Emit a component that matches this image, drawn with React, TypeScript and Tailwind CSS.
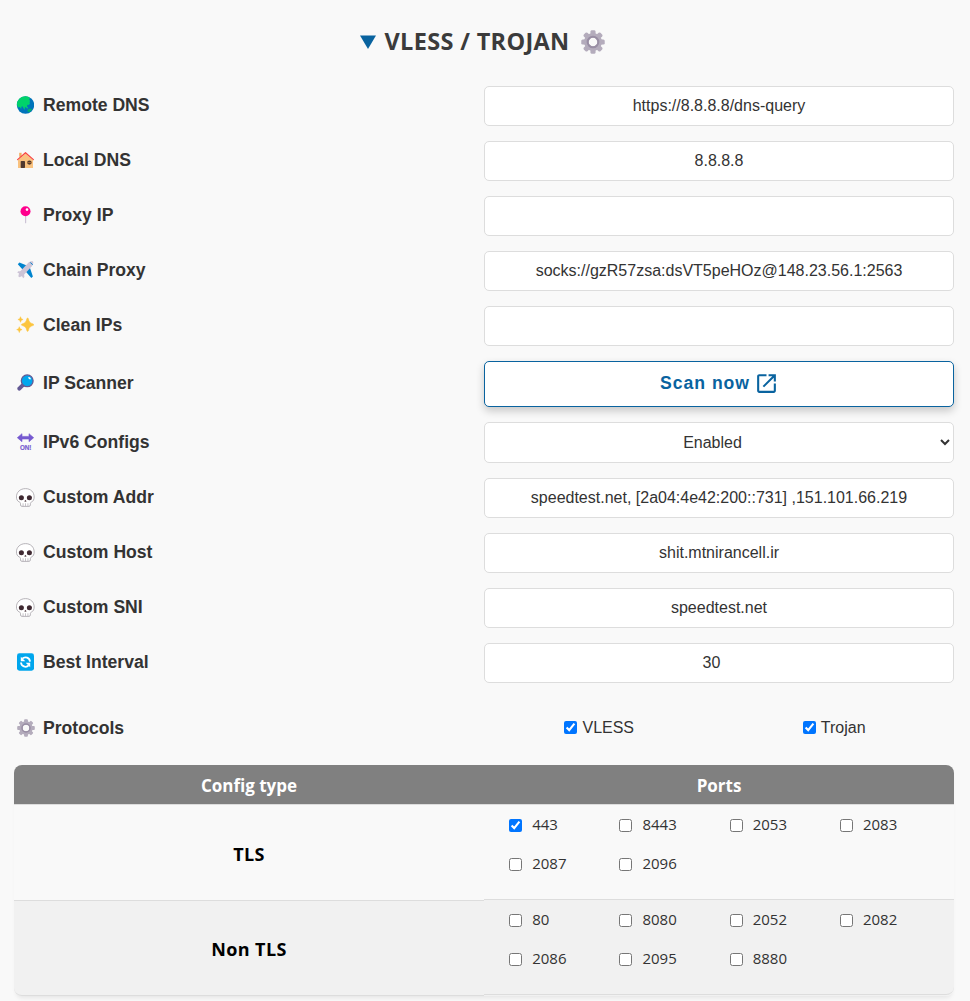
import type { ReactNode } from "react";

function Icon({ children, className = "size-[18px]" }: { children: ReactNode; className?: string }) {
  return (
    <svg viewBox="0 0 18 18" className={`${className} shrink-0`} aria-hidden="true">
      {children}
    </svg>
  );
}

function Gear({ className }: { className?: string }) {
  return (
    <Icon className={className}>
      {[0, 45, 90, 135, 180, 225, 270, 315].map((a) => (
        <path key={a} d="M7 4.200 7.100 1.200Q7.200.2 8.100.2h1.800q.9 0 1 1l.1 3z" fill="#b4acbc" transform={`rotate(${a} 9 9)`} />
      ))}
      <circle cx="9" cy="9" r="5" fill="none" stroke="#b4acbc" strokeWidth="3.400" />
      <circle cx="9" cy="9" r="4" fill="none" stroke="#998ea4" strokeWidth="1.500" />
    </Icon>
  );
}

const Globe = () => (
  <Icon>
    <circle cx="9.500" cy="9" r="8.700" fill="#0074ba" />
    <path d="M.9 8.200C1.300 3.600 5 .3 9.500.3c1.300 0 2.700.3 3.800.9l.6 1.800-1 .8 1.200 1-.6 1.500.5 1.300-1.300 1.500-1.400-.4-.3 1.900 1.200 1.200-.9.900-1.700-1.600-.9.6.4 2-1.500-1.300-1-2.200-1.200.6-.2 2.200-1.400-1.900-1.300.3-1-1.200z" fill="#00d26a" />
    <path d="M11.600 13.700l2.300-1.200 1.500.5.7.3c-.8 1.200-1.900 2.300-3.200 3l-1.400-1z" fill="#00b26a" />
  </Icon>
);
const House = () => (
  <Icon>
    <path d="M3.200 1.800h2.400v4H3.200z" fill="#f3ad61" />
    <path d="M9.500 2.500 17 9v8H2V9z" fill="#f9c27f" />
    <path d="M1.600 8.600 9.500 1.700l7.900 6.900" fill="none" stroke="#f8433f" strokeWidth="1.200" strokeLinecap="round" strokeLinejoin="round" />
    <rect x="4.700" y="10" width="4.300" height="7" rx=".7" fill="#50392f" />
    <ellipse cx="13.400" cy="11.600" rx="2.300" ry="2.100" fill="#50392f" />
    <path d="M11.200 11.600h4.600" stroke="#d3883e" strokeWidth=".7" />
  </Icon>
);
const Pin = () => (
  <Icon>
    <rect x="9" y="8" width="1.200" height="9.300" rx=".6" fill="#cdc4d6" />
    <circle cx="9.500" cy="5.300" r="5" fill="#ff008d" />
    <circle cx="11" cy="3.600" r="1.300" fill="#fff" />
  </Icon>
);
const Plane = () => (
  <Icon>
    <path d="M12 5 3.400 1.600 1.800 3.200 7.500 9.500zM13.500 5.500l3.400 9.900-1.600 1.500-6-7z" fill="#0084ce" />
    <path d="M6.500 10.600 2.300 10.200l-1.100 1.200 3.800 2.200 2.200 3.600 1.200-1.100-.5-4z" fill="#cdc4d6" />
    <path d="M12.600 1.500c1.700-1.300 3.900-1.400 4.400-.9s.4 2.600-.9 4.400L7 14.800 3.300 16.200 2.300 15.200 3.300 11.200z" fill="#cdc4d6" />
    <path d="M14.300 1.400 16.700 3.800" stroke="#0084ce" strokeWidth="1" />
  </Icon>
);
const Sparkles = () => (
  <Icon>
    <path d="M11.600 2c.5 0 .7.4.8.8.7 3.200 1.700 4.200 4.700 5.100.4.100.7.400.7.800s-.3.700-.7.800c-3 .9-4 1.900-4.700 5.100-.1.400-.3.800-.8.800s-.7-.4-.8-.8c-.7-3.200-1.700-4.200-4.700-5.100-.4-.1-.7-.4-.7-.8s.3-.7.7-.8c3-.9 4-1.900 4.700-5.100.1-.4.300-.8.800-.8z" fill="#fcc53f" stroke="#fcc53f" strokeWidth=".5" />
    <path d="M4.500.7 5.300 2.700 7.100 3.500 5.300 4.300 4.500 6.300 3.700 4.300 1.900 3.500 3.700 2.700zM3.300 10.700l.8 2.100 2 .8-2 .8-.8 2.200-.8-2.200-1.800-.8 1.800-.8z" fill="#fcc53f" stroke="#fcc53f" strokeWidth=".5" strokeLinejoin="round" />
  </Icon>
);
const Magnifier = () => (
  <Icon>
    <path d="M6.800 11.200 3.300 14.700" stroke="#635994" strokeWidth="4" strokeLinecap="round" />
    <path d="M8.200 9.800 6.800 11.200" stroke="#998ea4" strokeWidth="2" />
    <circle cx="11.200" cy="6.800" r="5.900" fill="#00a6ed" stroke="#635994" strokeWidth="1.300" />
    <ellipse cx="13.500" cy="4.200" rx="1.500" ry=".9" fill="#fff" transform="rotate(42 13.500 4.200)" />
  </Icon>
);
const OnArrow = () => (
  <Icon>
    <path d="M1.300 4.700 6 .7v2.700h7V.7l4.700 4-4.700 4V6H6v2.700z" fill="#7659d0" stroke="#7659d0" strokeWidth=".6" strokeLinejoin="round" />
    <text x="9.700" y="17.400" textAnchor="middle" fill="#7659d0" stroke="#7659d0" strokeWidth=".2" fontSize="7.500" fontWeight="700" fontFamily="Liberation Sans, sans-serif" textLength="11.500" lengthAdjust="spacingAndGlyphs">ON!</text>
  </Icon>
);
const Skull = () => (
  <Icon className="size-[19px] -mr-px">
    <path d="M9 .6C3.900.6.400 4 .400 8.500c0 2.300 1 4 2.700 4.700.8.300 1.200.9 1.200 1.600v1.300c0 .8.500 1.300 1.300 1.300h6.700c.8 0 1.300-.5 1.300-1.300v-1.300c0-.7.4-1.300 1.200-1.600 1.600-.7 2.400-2.400 2.400-4.700C17.200 4 14.100.6 9 .6z" fill="#fff" stroke="#aaa6ac" strokeWidth=".8" />
    <circle cx="5.100" cy="9.300" r="2.400" fill="#402a32" />
    <circle cx="12.700" cy="9.300" r="2.400" fill="#402a32" />
    <path d="M8 12.800 8.500 11.600h.9l.5 1.200-.5.300-.5-.4-.4.400z" fill="#402a32" />
    <path d="M6.700 14.500v2.700M9 14.500v2.700M11.300 14.500v2.700" stroke="#b0acb3" strokeWidth=".7" />
  </Icon>
);
const Refresh = () => (
  <Icon>
    <rect x="1" y=".3" width="17" height="17.400" rx="2.400" fill="#00a6ed" />
    <path d="M14 8.600A4.500 4.500 0 0 0 6.300 5.700M5 9.500a4.500 4.500 0 0 0 7.700 2.900" fill="none" stroke="#fff" strokeWidth="1.800" />
    <path d="M4.800 3.800v4.500h4.500zM14.200 14.300V9.800H9.700z" fill="#fff" />
  </Icon>
);

function Row({ icon, label, children }: { icon: ReactNode; label: string; children: ReactNode }) {
  return (
    <div className="grid grid-cols-[468px_470px] items-center">
      <label className="-mt-0.5 flex items-center gap-[9px] text-[17.6px] leading-7 font-bold text-[#333]">
        {icon}
        {label}
      </label>
      {children}
    </div>
  );
}

function Field({ icon, label, value = "", type = "text" }: { icon: ReactNode; label: string; value?: string; type?: string }) {
  return (
    <Row icon={icon} label={label}>
      <input
        type={type}
        defaultValue={value}
        className="h-10 w-full rounded-[5px] border border-[#ddd] bg-white px-2.5 text-center text-base text-[#333]"
      />
    </Row>
  );
}

function Ports({ ports }: { ports: string[] }) {
  return (
    <div className="grid h-full grid-cols-4 grid-rows-[39px_39px] pl-[25.200px] pr-[3.800px] font-['Open_Sans',sans-serif] text-[15px] text-[#333]">
      {ports.map((p) => (
        <label key={p} className="flex items-center gap-2.5">
          <input type="checkbox" defaultChecked={p === "443"} className="mt-0.5 size-[13px]" />
          {p}
        </label>
      ))}
    </div>
  );
}

export default function App() {
  return (
    <div className="h-[1001px] w-[970px] overflow-hidden bg-[#f9f9f9] font-['Liberation_Sans',Arial,sans-serif]">
      <h2 className="flex h-[86px] items-center justify-center pr-[6px] pb-[3px] font-['Open_Sans',sans-serif] text-2xl font-bold text-[#3b3b3b]">
        <svg viewBox="0 0 16 14" className="mr-[9px] h-[14px] w-4" aria-hidden="true">
          <path d="M0 .5h16L8 14z" fill="#09639f" />
        </svg>
        <span className="w-[184px] text-[23.500px] tracking-[0.33px] whitespace-nowrap">VLESS / TROJAN</span>
        <Gear className="ml-3 size-6" />
      </h2>
      <div className="flex flex-col gap-[15px] pl-4">
        <Field icon={<Globe />} label="Remote DNS" value="https://8.8.8.8/dns-query" />
        <Field icon={<House />} label="Local DNS" value="8.8.8.8" />
        <Field icon={<Pin />} label="Proxy IP" />
        <Field icon={<Plane />} label="Chain Proxy" value="socks://gzR57zsa:dsVT5peHOz@148.23.56.1:2563" />
        <Field icon={<Sparkles />} label="Clean IPs" />
        <Row icon={<Magnifier />} label="IP Scanner">
          <button className="flex h-[46px] w-full items-center justify-center rounded-[5px] border border-[#09639f] bg-white text-[17.600px] font-bold tracking-[1px] text-[#09639f] shadow-[0_4px_8px_rgba(0,0,0,0.2)]">
            <span className="-mt-0.5">Scan now</span>
            <svg viewBox="0 0 24 24" className="-mt-px -mr-px ml-1 size-[25px]" fill="currentColor" aria-hidden="true">
              <path d="M5 21q-.825 0-1.412-.587T3 19V5q0-.825.588-1.412T5 3h7v2H5v14h14v-7h2v7q0 .825-.587 1.413T19 21zm4.700-5.300-1.400-1.400L17.600 5H14V3h7v7h-2V6.400z" />
            </svg>
          </button>
        </Row>
        <Row icon={<OnArrow />} label="IPv6 Configs">
          <select className="h-[41px] w-full rounded-[5px] border border-[#ddd] bg-white pr-px text-center text-base text-[#333]">
            <option>Enabled</option>
            <option>Disabled</option>
          </select>
        </Row>
        <Field icon={<Skull />} label="Custom Addr" value="speedtest.net, [2a04:4e42:200::731] ,151.101.66.219" />
        <Field icon={<Skull />} label="Custom Host" value="shit.mtnirancell.ir" />
        <Field icon={<Skull />} label="Custom SNI" value="speedtest.net" />
        <Field icon={<Refresh />} label="Best Interval" value="30" type="number" />
      </div>
      <div className="flex h-[82px] items-center pt-[9px] pl-4">
        <Row icon={<Gear className="ml-px -mr-px size-[18px]" />} label="Protocols">
          <div className="-mt-0.5 grid grid-cols-2 text-base text-[#333]">
            {["VLESS", "Trojan"].map((p) => (
              <label key={p} className="flex items-center justify-center gap-[5px] pr-[4.500px]">
                <input type="checkbox" defaultChecked className="size-[13px]" />
                {p}
              </label>
            ))}
          </div>
        </Row>
      </div>
      <div className="ml-[14px] w-[940px] rounded-lg font-['Open_Sans',sans-serif] shadow-[0_4px_4px_-2px_rgba(0,0,0,0.08)]">
        <div className="grid h-10 grid-cols-2 items-center rounded-t-lg border-b border-[#ddd] bg-[#808080] pt-0.5 text-center text-[17px] font-bold text-white">
          <div>Config type</div>
          <div>Ports</div>
        </div>
        <div className="grid h-24 grid-cols-2 bg-[#f9f9f9]">
          <div className="flex items-center justify-center border-b border-[#ddd] pt-0.5 text-lg font-bold tracking-[0.4px] text-black">TLS</div>
          <div className="h-[95px] border-b border-[#ddd]">
            <Ports ports={["443", "8443", "2053", "2083", "2087", "2096"]} />
          </div>
        </div>
        <div className="grid h-[95px] grid-cols-2 rounded-b-lg bg-[#f1f1f1]">
          <div className="flex items-center justify-center rounded-bl-lg border-b border-[#ddd] pt-0.5 text-lg font-bold tracking-[0.4px] text-black">Non TLS</div>
          <div className="-mt-px h-[95px] rounded-br-lg border-b border-[#ddd] bg-[#f1f1f1]">
            <Ports ports={["80", "8080", "2052", "2082", "2086", "2095", "8880"]} />
          </div>
        </div>
      </div>
    </div>
  );
}
